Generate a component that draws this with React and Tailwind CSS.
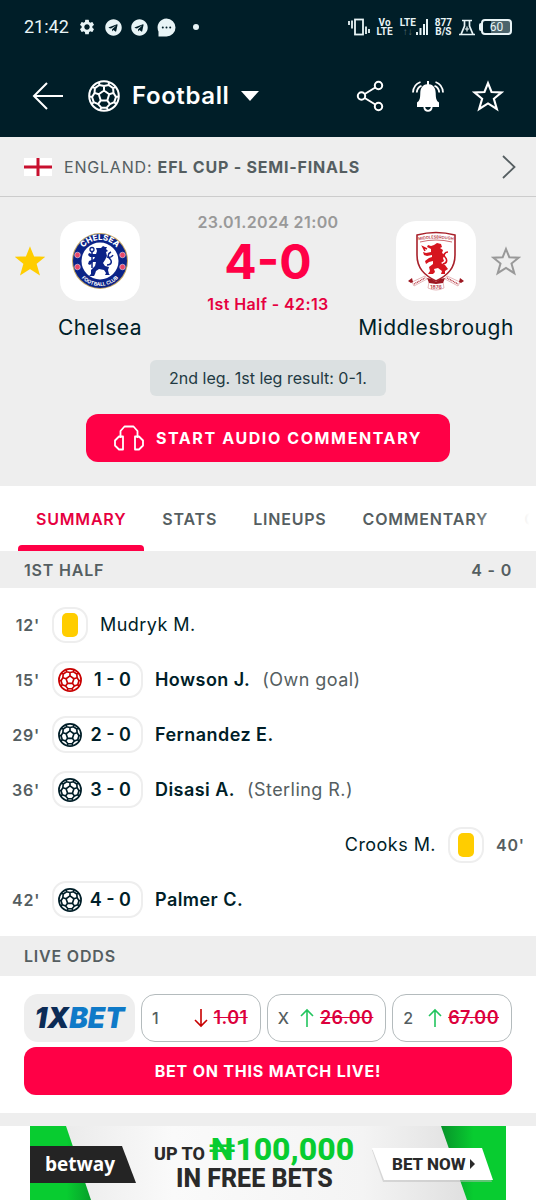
import React, { useState } from 'react';
import { MdSettings } from 'react-icons/md';
import { FaTelegram } from 'react-icons/fa';

const tabs = ['Summary', 'Stats', 'Lineups', 'Commentary', 'Odds'];

const events = [
  { minute: "12'", type: 'card', player: 'Mudryk M.', side: 'home' },
  { minute: "15'", type: 'own', score: '1 - 0', player: 'Howson J.', note: '(Own goal)', side: 'home' },
  { minute: "29'", type: 'goal', score: '2 - 0', player: 'Fernandez E.', side: 'home' },
  { minute: "36'", type: 'goal', score: '3 - 0', player: 'Disasi A.', note: '(Sterling R.)', side: 'home' },
  { minute: "40'", type: 'card', player: 'Crooks M.', side: 'away' },
  { minute: "42'", type: 'goal', score: '4 - 0', player: 'Palmer C.', side: 'home' },
];

const odds = [
  { label: '1', value: '1.01', trend: 'down' },
  { label: 'X', value: '26.00', trend: 'up' },
  { label: '2', value: '67.00', trend: 'up' },
];

// Point on a circle around the middle of the 32x32 ball
const at = (radius, degrees) => {
  const rad = (degrees * Math.PI) / 180;
  return `${(16 + radius * Math.cos(rad)).toFixed(2)} ${(16 + radius * Math.sin(rad)).toFixed(2)}`;
};
const corners = [-90, -18, 54, 126, 198];
const ballPath =
  `M${corners.map((a) => at(5.5, a)).join('L')}Z` +
  corners
    .map((a) => `M${at(5.5, a)}L${at(10, a)}M${at(14.5, a - 20)}L${at(12, a - 23)}L${at(10, a)}L${at(12, a + 23)}L${at(14.5, a + 20)}M${at(12, a + 23)}L${at(12, a + 49)}`)
    .join('');

const Ball = ({ className, strokeWidth = 2 }) => (
  <svg viewBox="0 0 32 32" className={className} fill="none" stroke="currentColor" strokeWidth={strokeWidth} strokeLinejoin="round">
    <circle cx="16" cy="16" r="14.8" />
    <path d={ballPath} />
  </svg>
);

const Star = ({ className, fill = 'none' }) => (
  <svg viewBox="0 0 30 30" className={className} fill={fill} stroke="currentColor" strokeWidth="2" strokeLinejoin="miter">
    <path d="M15 3 18.3 11.2 27.5 11.7 20.5 17.6 23.3 27.2 15 22 6.7 27.2 9.5 17.6 2.5 11.7 11.7 11.2Z" />
  </svg>
);

const Arrow = ({ trend }) => (
  <svg viewBox="0 0 14 20" className={trend === 'up' ? 'h-5 w-3.5 text-[#22c55e]' : 'h-5 w-3.5 text-[#c80000]'} fill="none" stroke="currentColor" strokeWidth="1.6">
    <path d={trend === 'up' ? 'M7 19V2M1 8 7 2 13 8' : 'M7 1V18M1 12 7 18 13 12'} />
  </svg>
);

const StatusBar = () => (
  <div className="flex h-[54px] items-center justify-between px-6 font-[Roboto,sans-serif] text-[#e8f4f6]">
    <div className="flex items-center gap-[9px]">
      <span className="text-lg">21:42</span>
      <MdSettings size={18} />
      <FaTelegram size={17} />
      <FaTelegram size={17} />
      <svg width="19" height="19" viewBox="0 0 19 19">
        <path fill="currentColor" d="M9.5.5a9 9 0 1 1 0 18H1.5v-5A9 9 0 0 1 9.5.5Z" />
        <g fill="#001e28">
          <circle cx="5.8" cy="9.5" r="1" />
          <circle cx="9.5" cy="9.5" r="1" />
          <circle cx="13.2" cy="9.5" r="1" />
        </g>
      </svg>
      <span className="ml-2 h-1.5 w-1.5 rounded-full bg-[#e8f4f6]" />
    </div>
    <div className="flex items-center gap-[7px] text-[10px] font-bold leading-[9px]">
      <svg width="22" height="18" viewBox="0 0 22 18" fill="none" stroke="currentColor" strokeWidth="1.8">
        <rect x="7" y="1.5" width="8" height="15" />
        <path d="M1 3v4M4 2.5v8M18 8.5v7.5M21 11v4" />
      </svg>
      <span className="text-center">Vo<br />LTE</span>
      <span className="flex items-end">
        <span className="text-center">LTE<br /><span className="text-[#5b7078]">↑↓</span></span>
        <svg width="12" height="18" viewBox="0 0 12 18" fill="none" stroke="currentColor" strokeWidth="2">
          <path d="M1 17v-3M4.5 17v-7M8 17V6M11 17V1" />
        </svg>
      </span>
      <span className="text-center">877<br />B/S</span>
      <div className="flex items-center gap-1">
        <svg width="16" height="17" viewBox="0 0 16 17" fill="none" stroke="currentColor" strokeWidth="1.7">
          <path d="M3 1.5h10M5.5 2v5L2 15.5h12L10.5 7V2M0 15.5h16" />
          <path d="M8 7.5v5M5.8 10h4.4" strokeWidth="1.2" />
        </svg>
        <span className="flex items-center">
          <span className="h-2 w-0.5 rounded-l bg-[#e8f4f6]" />
          <span className="flex h-4 w-[31px] items-center justify-center rounded-[4px] border-2 border-[#e8f4f6] bg-linear-to-r from-[#001e28] from-30% to-[#4b646c] to-30% text-xs font-normal">60</span>
        </span>
      </div>
    </div>
  </div>
);

const AppBar = () => (
  <header className="flex h-[83px] items-center justify-between px-8 text-white">
    <div className="flex items-center">
      <button aria-label="Back" className="mr-6">
        <svg width="32" height="28" viewBox="0 0 32 28" fill="none" stroke="currentColor" strokeWidth="2">
          <path d="M15 1 2 14 15 27M2 14H31" />
        </svg>
      </button>
      <button className="flex items-center gap-3">
        <Ball className="h-8 w-8" />
        <span className="text-2xl font-semibold tracking-wide">Football</span>
        <svg width="18" height="10" viewBox="0 0 18 10" fill="currentColor">
          <path d="M0 0h18L9 10Z" />
        </svg>
      </button>
    </div>
    <div className="flex items-center gap-7">
      <button aria-label="Share">
        <svg width="28" height="32" viewBox="0 0 28 32" fill="none" stroke="currentColor" strokeWidth="2">
          <circle cx="5.5" cy="16" r="3.7" />
          <circle cx="22.5" cy="5.5" r="3.7" />
          <circle cx="22.5" cy="26.5" r="3.7" />
          <path d="M8.7 14 19.3 7.5M8.7 18 19.3 24.5" />
        </svg>
      </button>
      <button aria-label="Notifications">
        <svg width="32" height="32" viewBox="0 0 32 32" fill="none" stroke="currentColor" strokeWidth="1.8">
          <path fill="currentColor" stroke="none" d="M15 1h2v3.3c4.5.5 6.6 3.7 6.7 8.7.1 6 .8 7.8 3.3 9.5v4.5H5v-4.5c2.5-1.7 3.2-3.5 3.3-9.5.1-5 2.2-8.2 6.7-8.7Z" />
          <path d="M12.2 27c.4 2.6 1.8 3.8 3.8 3.8s3.4-1.2 3.8-3.8M8.5 2C4 3.5 1.3 7 1 12.5M9.5 5.8C6.6 6.8 5 9.2 4.8 12.5M23.5 2c4.5 1.5 7.2 5 7.5 10.5M22.5 5.8c2.9 1 4.5 3.4 4.7 6.7" />
        </svg>
      </button>
      <button aria-label="Add to favourites">
        <Star className="h-8 w-8" />
      </button>
    </div>
  </header>
);

const ChelseaCrest = () => (
  <svg viewBox="0 0 80 80" className="h-20 w-20 rounded-[20px] bg-white">
    <circle cx="40" cy="40" r="28" fill="#c3a663" />
    <circle cx="40" cy="40" r="27" fill="#0b2387" />
    <circle cx="40" cy="40" r="18.5" fill="#fff" />
    <path id="chelseaTop" d="M19 40a21 21 0 0 1 42 0" fill="none" />
    <path id="chelseaBottom" d="M15 40a25 25 0 0 0 50 0" fill="none" />
    <g className="font-[Inter,sans-serif]" fill="#fff" textAnchor="middle">
      <text fontSize="8" fontWeight="800"><textPath href="#chelseaTop" startOffset="50%">CHELSEA</textPath></text>
      <text fontSize="5" fontWeight="700"><textPath href="#chelseaBottom" startOffset="50%">FOOTBALL CLUB</textPath></text>
    </g>
    <g fill="#e8486a" stroke="#fff" strokeWidth=".5">
      <circle cx="17.5" cy="34" r="2.8" />
      <circle cx="17.5" cy="46" r="2.8" />
      <circle cx="62.5" cy="34" r="2.8" />
      <circle cx="62.5" cy="46" r="2.8" />
    </g>
    <path
      fill="#0b2387"
      d="M41 27l2-2 2 1 2 0-1 2 2 2-2 1 1 4-2 4-2 3 2 3 4 1-1 3 1 4 1 1-5 0 1-2-2-3-5-1-3 2-1 3-1 2-5 0 2-2 0-4 4-4 1-4-3 0-3 3-2-1 1-3 5-2 1-2-5 0-2-2 1-2 3 1 4 0 1-3-1-3Z"
    />
    <path d="M32 30v17M47 44c5 0 5-4 3-6s-3-5 1-7M47 36c3 1 5 0 6-2" fill="none" stroke="#0b2387" strokeWidth="1.5" />
    <circle cx="32" cy="28.5" r="2" fill="none" stroke="#0b2387" strokeWidth="1.3" />
  </svg>
);

const BoroCrest = () => (
  <svg viewBox="0 0 80 80" className="h-20 w-20 rounded-[20px] bg-white">
    <path d="M21 14q19-5 38 0v20c0 13-7 20-19 26C28 54 21 47 21 34Z" fill="#fff" stroke="#a8202a" strokeWidth="1.6" />
    <path d="M24 21q16-4 32 0" fill="none" stroke="#c0464e" strokeWidth=".8" />
    <path id="boroTop" d="M22 19.5q18-4 36 0" fill="none" />
    <text fontSize="4" fontWeight="600" fill="#b5303a" textAnchor="middle" className="font-[Inter,sans-serif]">
      <textPath href="#boroTop" startOffset="50%">MIDDLESBROUGH</textPath>
    </text>
    <path
      fill="#d6151f"
      d="M38 24l3-2 4 1 1 3-2 1 3 2-1 3 3 2-2 3 1 3-3 2 4 2 3 4-3 2 0 3-4 0 1-3-4-3-4 1 1 3-2 2-5 0 2-3-1-4 4-3 0-3-4 1-3 2-1-3 4-3 3-1 0-2-5 1-3-1-1-3 3 1 5-1 0-3-4-2 1-2 3 1Z"
    />
    <path d="M47 43c5-1 4-5 2-7s0-5 3-5M29 30l-2-4 4 2" fill="none" stroke="#d6151f" strokeWidth="1.6" />
    <path d="M16 61 29 55l2 3-13 7ZM64 61 51 55l-2 3 13 7ZM33 61l-1 6q8 4 16 0l-1-6" fill="#fff" stroke="#d99a9e" strokeWidth=".7" />
    <path d="M18 63l11-6M51 57l11 6" stroke="#b5303a" strokeWidth="1.4" strokeDasharray="1 .7" />
    <path d="M31 57l5 1 4 3 4-3 5-1-2 5-7 1-7-1ZM12 60l4-3 1 4-2 1ZM68 60l-4-3-1 4 2 1Z" fill="#9c1822" />
    <text x="40" y="67.5" fontSize="5" fontWeight="600" fill="#b5303a" textAnchor="middle" className="font-[Inter,sans-serif]">1876</text>
  </svg>
);

const MatchHeader = () => (
  <section className="bg-[#eeeeee] pb-6">
    <a href="#league" className="flex h-[60px] items-center border-b border-[#cccccc] px-5 text-base tracking-wider text-[#555e61]">
      <svg width="28" height="18" viewBox="0 0 28 18" className="ml-1 mr-3">
        <path fill="#fff" d="M0 0h28v18H0z" />
        <path fill="#c8102e" d="M12.5 0h3v18h-3zM0 7.5h28v3H0z" />
      </svg>
      <span className="flex-1 whitespace-nowrap">ENGLAND: <b>EFL CUP - SEMI-FINALS</b></span>
      <svg width="14" height="24" viewBox="0 0 14 24" fill="none" stroke="currentColor" strokeWidth="1.8">
        <path d="M1 1 12.5 12 1 23" />
      </svg>
    </a>
    <div className="flex items-start justify-between px-[15px] pt-[15px]">
      <div className="flex items-center gap-[15px] pt-[9px]">
        <button aria-label="Unfollow Chelsea" className="text-[#ffcd00]"><Star className="h-[30px] w-[30px]" fill="currentColor" /></button>
        <ChelseaCrest />
      </div>
      <div className="text-center font-semibold">
        <div className="text-base leading-5 tracking-wide text-[#999999]">23.01.2024 21:00</div>
        <div className="text-5xl font-bold leading-[60px] text-[#ff0046]">4-0</div>
        <div className="text-base leading-6 tracking-wide text-[#e6003f]">1st Half - 42:13</div>
      </div>
      <div className="flex items-center gap-[15px] pt-[9px]">
        <BoroCrest />
        <button aria-label="Follow Middlesbrough" className="text-[#999999]"><Star className="h-[30px] w-[30px]" /></button>
      </div>
    </div>
    <div className="flex justify-between text-[21px] leading-6 tracking-wide text-[#001e28]">
      <span className="w-[200px] text-center">Chelsea</span>
      <span className="w-[200px] text-center">Middlesbrough</span>
    </div>
    <div className="mt-5 flex flex-col items-center gap-[18px]">
      <p className="rounded-md bg-[#dbe0e1] px-[19px] py-1.5 text-base text-[#223a43]">2nd leg. 1st leg result: 0-1.</p>
      <button className="flex h-12 items-center gap-3 rounded-xl bg-[#ff0046] px-7 text-base font-bold tracking-widest text-white">
        <svg width="30" height="26" viewBox="0 0 30 26" fill="none" stroke="currentColor" strokeWidth="1.8" strokeLinejoin="round">
          <path d="M6.5 13V6L10.5 1.5h9L23.5 6v7M9 11.5v13H5l-4-4v-5l4-4ZM21 11.5v13h4l4-4v-5l-4-4Z" />
        </svg>
        START AUDIO COMMENTARY
      </button>
    </div>
  </section>
);

const EventRow = ({ event }) => {
  const away = event.side === 'away';

  return (
    <li className={away ? 'flex h-[55px] flex-row-reverse items-center gap-3 px-3' : 'flex h-[55px] items-center gap-3 px-3'}>
      <span className={away ? 'w-7 text-left font-semibold tracking-wider text-[#555e61]' : 'w-7 text-right font-semibold tracking-wider text-[#555e61]'}>{event.minute}</span>
      {event.type === 'card' ? (
        <span className="flex h-9 w-9 items-center justify-center rounded-[14px] border-2 border-[#eeeeee]">
          <span className="h-6 w-4 rounded-[5px] bg-[#ffcd00]" />
        </span>
      ) : (
        <span className="flex h-[37px] w-[91px] items-center justify-between rounded-[14px] border-2 border-[#eeeeee] pl-1 pr-2.5">
          <Ball className={event.type === 'own' ? 'h-6 w-6 text-[#c80000]' : 'h-6 w-6'} strokeWidth={2.2} />
          <b className="text-lg font-semibold">{event.score}</b>
        </span>
      )}
      <span className={event.type === 'card' ? 'text-lg tracking-wide' : 'text-lg font-semibold tracking-wide'}>{event.player}</span>
      {event.note && <span className="text-lg tracking-wide text-[#555e61]">{event.note}</span>}
    </li>
  );
};

const LiveOdds = () => (
  <section className="px-6 py-[18px]">
    <div className="flex h-12 gap-1.5">
      <a href="#bookmaker" className="flex w-[111px] items-center justify-center rounded-[14px] bg-[#eeeeee] text-[28px] font-black italic text-[#0b2b55]">
        1X<span className="text-[#0f7ac8]">BET</span>
      </a>
      {odds.map((odd) => (
        <button key={odd.label} className="flex flex-1 items-center rounded-[14px] border border-[#b4bbbd] pl-2.5 pr-3">
          <span className="flex-1 text-left text-base font-medium text-[#555e61]">{odd.label}</span>
          <Arrow trend={odd.trend} />
          <s className="ml-1.5 text-lg font-semibold tracking-wide text-[#dc003c]">{odd.value}</s>
        </button>
      ))}
    </div>
    <button className="mt-[5px] h-12 w-full rounded-xl bg-[#ff0046] text-base font-bold tracking-wider text-white">BET ON THIS MATCH LIVE!</button>
  </section>
);

const Banner = () => (
  <a href="#betway" className="mx-[30px] block">
    <svg viewBox="0 0 476 74" className="block w-full font-[Roboto,sans-serif]" fontWeight="800">
      <defs>
        <linearGradient id="paper" x1="0" x2="1">
          <stop offset="0" stopColor="#e6e6e6" />
          <stop offset=".3" stopColor="#fafafa" />
          <stop offset=".7" stopColor="#f4f4f4" />
          <stop offset="1" stopColor="#d8d8d8" />
        </linearGradient>
        <linearGradient id="leftGreen">
          <stop offset=".6" stopColor="#08cc30" />
          <stop offset="1" stopColor="#07a02a" />
        </linearGradient>
        <linearGradient id="rightGreen">
          <stop offset="0" stopColor="#07932a" />
          <stop offset=".5" stopColor="#08cc30" />
        </linearGradient>
      </defs>
      <path fill="url(#paper)" d="M0 0h476v74H0z" />
      <path fill="url(#leftGreen)" d="M0 0h36l25 74H0z" />
      <path fill="url(#rightGreen)" d="M411 0h65v74h-39z" />
      <path fill="#242424" d="M0 20h92l14 37H0z" />
      <path fill="#bbb" opacity=".5" d="M342 24h109l11 32H353z" />
      <path fill="#fff" d="M342 22h110l11 32H354z" />
      <text x="15" y="45" fontSize="19" fontWeight="700" fill="#fff" className="font-['Open_Sans',sans-serif]">betway</text>
      <text x="124" y="34" fontSize="18" fill="#2a2a2a">UP TO</text>
      <text x="179" y="34" fontSize="32" fill="#08cc30">₦100,000</text>
      <text x="146" y="61" fontSize="25" fill="#2a2a2a">IN FREE BETS</text>
      <text x="362" y="44" fontSize="17" fill="#2a2a2a">BET NOW</text>
      <path fill="#2a2a2a" d="M440 33l5 5-5 5z" />
    </svg>
  </a>
);

const App = () => {
  const [activeTab, setActiveTab] = useState('Summary');

  return (
    <div className="w-full overflow-hidden bg-white font-[Inter,sans-serif] text-base text-[#001e28]">
      <div className="bg-[#001e28]">
        <StatusBar />
        <AppBar />
      </div>

      <MatchHeader />

      <nav className="relative flex h-[65px] overflow-hidden pl-[18px]">
        {tabs.map((tab) => (
          <button
            key={tab}
            onClick={() => setActiveTab(tab)}
            className={`relative h-full shrink-0 px-[18px] font-semibold uppercase tracking-wider ${
              activeTab === tab ? 'text-[#e6003f]' : 'text-[#555e61]'
            }`}
          >
            {tab}
            {activeTab === tab && <span className="absolute inset-x-0 bottom-0 h-1.5 rounded-t bg-[#ff0046]" />}
          </button>
        ))}
        <span className="pointer-events-none absolute inset-y-0 right-0 w-16 bg-linear-to-r from-white/0 to-white to-90%" />
      </nav>

      <h2 className="flex h-[37px] items-center justify-between bg-[#eeeeee] px-6 font-semibold tracking-wider text-[#555e61]">
        <span>1ST HALF</span>
        <span>4 - 0</span>
      </h2>
      <ul className="py-[9px]">
        {events.map((event) => (
          <EventRow key={event.minute} event={event} />
        ))}
      </ul>

      <h2 className="flex h-10 items-center bg-[#eeeeee] px-6 font-semibold tracking-wider text-[#555e61]">LIVE ODDS</h2>
      <LiveOdds />
      <div className="h-[13px] bg-[#eeeeee]" />
      <Banner />
    </div>
  );
};

export default App;
